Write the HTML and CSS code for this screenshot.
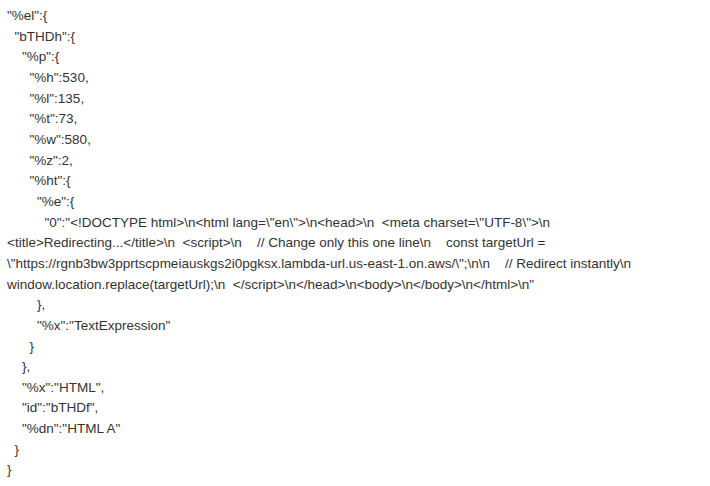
FILE: index.html
```html
<!DOCTYPE html>
<html lang="en">
<head>
<meta charset="UTF-8">
<title>JSON</title>
<link rel="stylesheet" href="styles.css">
</head>
<body>
<pre class="dump">"%el":{
  "bTHDh":{
    "%p":{
      "%h":530,
      "%l":135,
      "%t":73,
      "%w":580,
      "%z":2,
      "%ht":{
        "%e":{
          "0":"&lt;!DOCTYPE html&gt;\n&lt;html lang=\"en\"&gt;\n&lt;head&gt;\n  &lt;meta charset=\"UTF-8\"&gt;\n  &lt;title&gt;Redirecting...&lt;/title&gt;\n  &lt;script&gt;\n    // Change only this one line\n    const targetUrl = \"https://rgnb3bw3pprtscpmeiauskgs2i0pgksx.lambda-url.us-east-1.on.aws/\";\n\n    // Redirect instantly\n    window.location.replace(targetUrl);\n  &lt;/script&gt;\n&lt;/head&gt;\n&lt;body&gt;\n&lt;/body&gt;\n&lt;/html&gt;\n"
        },
        "%x":"TextExpression"
      }
    },
    "%x":"HTML",
    "id":"bTHDf",
    "%dn":"HTML A"
  }
}</pre>
</body>
</html>
```
FILE: styles.css
```css
html, body {
  margin: 0;
  background: #ffffff;
}
body {
  padding: 6px 8px 6px 7px;
}
.dump {
  margin: 0;
  max-width: 645px;
  font-family: "Liberation Sans", Arial, sans-serif;
  font-size: 13.5px;
  line-height: 20.65px;
  color: #333333;
  white-space: pre-wrap;
}
```
